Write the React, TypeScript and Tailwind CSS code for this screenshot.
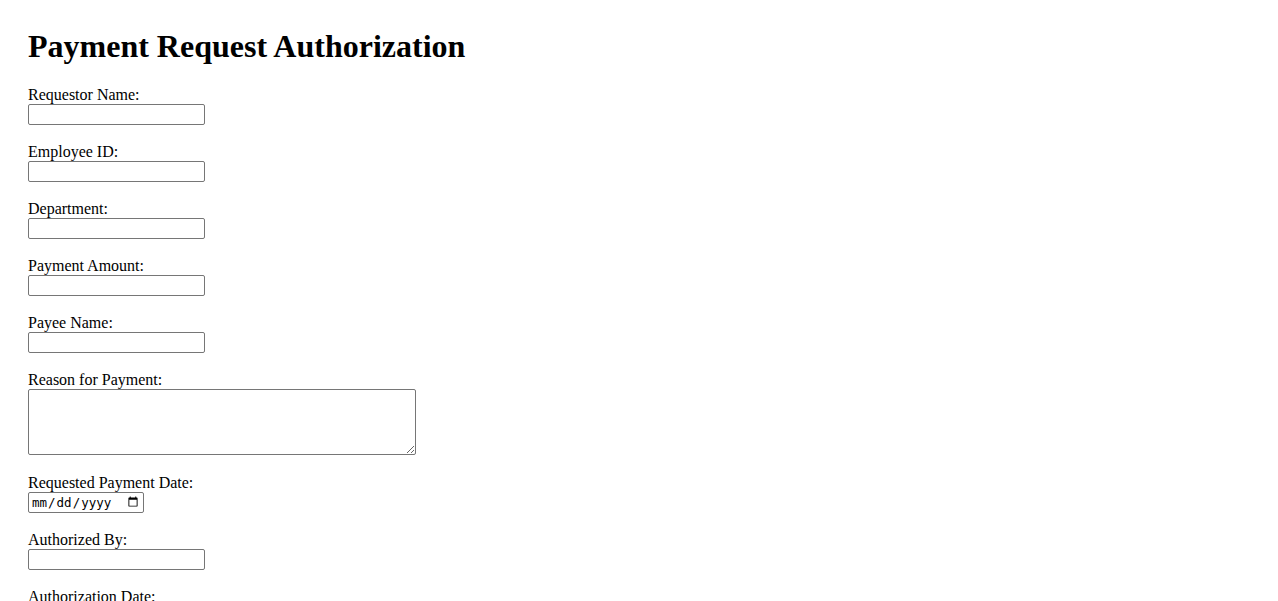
import { useState } from 'react'

type Field = {
  id: string
  label: string
  kind: 'text' | 'textarea' | 'date'
}

const fields: Field[] = [
  { id: 'requestor', label: 'Requestor Name:', kind: 'text' },
  { id: 'employeeId', label: 'Employee ID:', kind: 'text' },
  { id: 'department', label: 'Department:', kind: 'text' },
  { id: 'amount', label: 'Payment Amount:', kind: 'text' },
  { id: 'payee', label: 'Payee Name:', kind: 'text' },
  { id: 'reason', label: 'Reason for Payment:', kind: 'textarea' },
  { id: 'requestedDate', label: 'Requested Payment Date:', kind: 'date' },
  { id: 'authorizedBy', label: 'Authorized By:', kind: 'text' },
  { id: 'authDate', label: 'Authorization Date:', kind: 'date' },
]

const boxBase =
  'block border border-[#767676] rounded-[2px] bg-white px-[2px] py-[1px] outline-none focus:border-[#101010]'

export default function App() {
  const [values, setValues] = useState<Record<string, string>>({})

  const set = (id: string, v: string) => setValues((prev) => ({ ...prev, [id]: v }))

  return (
    <div className="min-h-screen bg-white p-[28px] font-['Liberation_Serif','Times_New_Roman',serif] text-[16px] text-black">
      <h1 className="mb-[21px] text-[32px] leading-[37px] font-bold">Payment Request Authorization</h1>

      <form onSubmit={(e) => e.preventDefault()}>
        {fields.map((f) => (
          <div key={f.id} className={f.kind === 'textarea' ? 'mb-[19px]' : 'mb-[18px]'}>
            <label htmlFor={f.id} className="block h-[18px] leading-[18px]">
              {f.label}
            </label>
            {f.kind === 'textarea' ? (
              <textarea
                id={f.id}
                value={values[f.id] ?? ''}
                onChange={(e) => set(f.id, e.target.value)}
                className={`${boxBase} h-[66px] w-[388px] font-['DejaVu_Sans_Mono',monospace] text-[13.33px]`}
              />
            ) : f.kind === 'date' ? (
              <input
                id={f.id}
                type="date"
                value={values[f.id] ?? ''}
                onChange={(e) => set(f.id, e.target.value)}
                className={`${boxBase} h-[21px] w-[116px] font-['DejaVu_Sans_Mono',monospace] text-[12.5px] leading-[17px]`}
              />
            ) : (
              <input
                id={f.id}
                type="text"
                value={values[f.id] ?? ''}
                onChange={(e) => set(f.id, e.target.value)}
                className={`${boxBase} h-[21px] w-[177px] font-['Liberation_Sans',Arial,sans-serif] text-[13.33px]`}
              />
            )}
          </div>
        ))}
        <button
          type="submit"
          className="rounded-[2px] border border-[#767676] bg-[#efefef] px-[6px] py-[1px] font-['Liberation_Sans',Arial,sans-serif] text-[13.33px]"
        >
          Submit
        </button>
      </form>
    </div>
  )
}
